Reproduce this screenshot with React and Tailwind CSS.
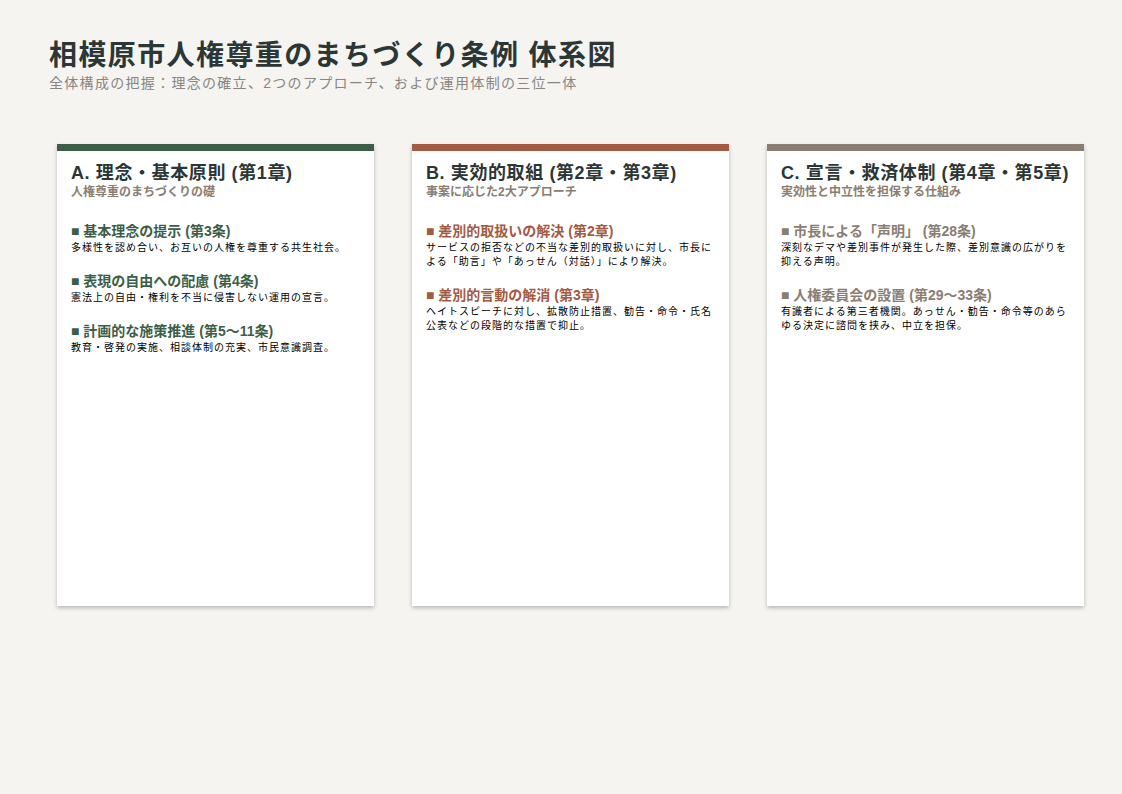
const F = { fontFamily: '"Liberation Sans","Noto Sans CJK JP",sans-serif' };
const cards = [
  { t: 'A. 理念・基本原則 (第1章)', s: '人権尊重のまちづくりの礎', c: '#3b5e48', items: [
    ['基本理念の提示 (第3条)', '多様性を認め合い、お互いの人権を尊重する共生社会。'],
    ['表現の自由への配慮 (第4条)', '憲法上の自由・権利を不当に侵害しない運用の宣言。'],
    ['計画的な施策推進 (第5〜11条)', '教育・啓発の実施、相談体制の充実、市民意識調査。'],
  ]},
  { t: 'B. 実効的取組 (第2章・第3章)', s: '事案に応じた2大アプローチ', c: '#a35a43', items: [
    ['差別的取扱いの解決 (第2章)', 'サービスの拒否などの不当な差別的取扱いに対し、市長による「助言」や「あっせん（対話）」により解決。'],
    ['差別的言動の解消 (第3章)', 'ヘイトスピーチに対し、拡散防止措置、勧告・命令・氏名公表などの段階的な措置で抑止。'],
  ]},
  { t: 'C. 宣言・救済体制 (第4章・第5章)', s: '実効性と中立性を担保する仕組み', c: '#8a7d72', items: [
    ['市長による「声明」 (第28条)', '深刻なデマや差別事件が発生した際、差別意識の広がりを抑える声明。'],
    ['人権委員会の設置 (第29〜33条)', '有識者による第三者機関。あっせん・勧告・命令等のあらゆる決定に諮問を挟み、中立を担保。'],
  ]},
];
export default function App() {
  return (
    <div style={F} className="w-[1122px] h-[794px] bg-[#f5f4f0] pl-[49px] pt-[38px] overflow-hidden">
      <h1 className="text-[28px] font-bold text-[#2b3636] leading-[36px] tracking-[1.4px]">相模原市人権尊重のまちづくり条例 体系図</h1>
      <p className="text-[14px] text-[#8a8580] leading-[18px] tracking-[1.3px]">全体構成の把握：理念の確立、2つのアプローチ、および運用体制の三位一体</p>
      <div className="mt-[52px] ml-[8px] flex gap-[38px]">
        {cards.map((c) => (
          <div key={c.t} className="shrink-0 w-[317px] h-[462px] bg-white shadow-[0_2px_4px_rgba(0,0,0,0.25)] border-t-[7px] pl-[14px] pr-[12px] pt-[11px]" style={{ borderTopColor: c.c }}>
            <h2 className="text-[18px] font-bold text-[#2b3636] leading-[22px] tracking-[0.6px]">{c.t}</h2>
            <p className="text-[12px] font-bold text-[#8a7d72] leading-[16px]">{c.s}</p>
            <div className="mt-[22px] flex flex-col gap-[17px]">
              {c.items.map(([h, d]) => (
                <div key={h}>
                  <h3 className="text-[14px] font-bold leading-[18px]" style={{ color: c.c }}>■ {h}</h3>
                  <p className="text-[10px] text-black leading-[14px] mt-[1px] tracking-[1px]">{d}</p>
                </div>
              ))}
            </div>
          </div>
        ))}
      </div>
    </div>
  );
}
